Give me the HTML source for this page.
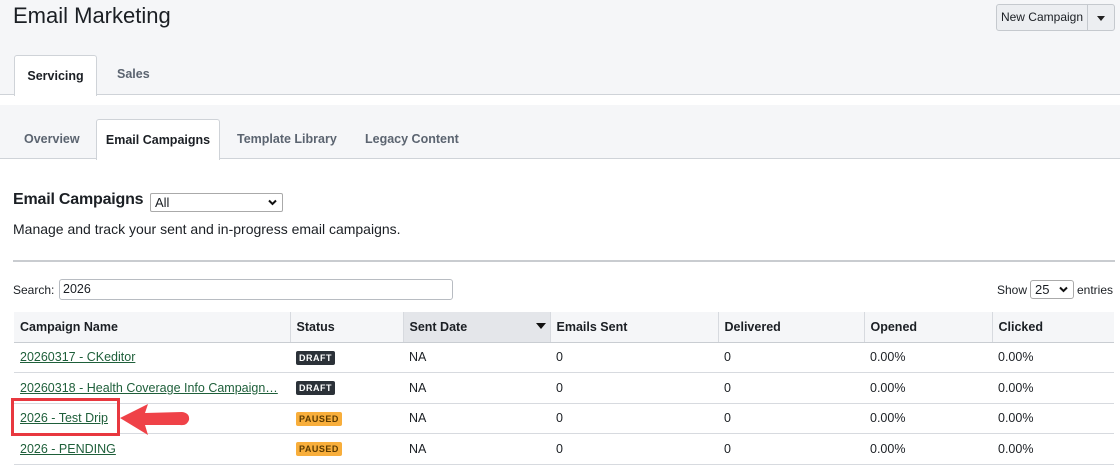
<!DOCTYPE html>
<html><head><meta charset="utf-8"><style>
*{box-sizing:border-box;margin:0;padding:0}
body{width:1120px;height:470px;overflow:hidden;background:#fff;font-family:"Liberation Sans",sans-serif;color:#1b1f24;position:relative;font-size:13px}
.abs{position:absolute}
.top{left:0;top:0;width:1120px;height:95px;background:#f5f6f8;border-bottom:1px solid #cfd3d8}
.sub{left:0;top:105px;width:1120px;height:54px;background:#f5f6f8;border-bottom:1px solid #cfd3d8}
.tab{position:absolute;background:#fff;border:1px solid #cfd3d8;border-bottom:none;border-radius:3px 3px 0 0;font-weight:bold;font-size:12.5px;text-align:center}
.gt{position:absolute;color:#5b6470;font-weight:bold;font-size:12.5px}
table{position:absolute;left:14px;top:312px;width:1100px;border-collapse:collapse;font-size:12.5px}
th{height:30px;background:#f5f6f8;text-align:left;padding-left:6px;border-right:1px solid #d7dadf;border-bottom:1px solid #c9cdd2;font-weight:bold}
th:last-child{border-right:none}
td{height:30.5px;padding-left:6px;border-bottom:1px solid #d7dadf}
a{color:#1e5f3a;text-decoration:underline}
.b{display:inline-block;font-size:9px;font-weight:bold;padding:2px 3px;border-radius:2px;letter-spacing:.5px}
.d{background:#2b3138;color:#fff}.p{background:#f8ae3b;color:#5a3a00}
.chev{position:absolute;right:5px;top:5px}
</style></head><body>
<div class="abs top"></div>
<div class="abs" style="left:13px;top:3px;font-size:22px">Email Marketing</div>
<div class="abs" style="left:996px;top:4px;width:119px;height:27px;border:1px solid #c5c9ce;border-radius:3px;background:#eceef1;font-size:12px">
<div class="abs" style="left:0;top:0;width:91px;height:25px;line-height:25px;text-align:center;border-right:1px solid #c5c9ce">New Campaign</div>
<div class="abs" style="left:100px;top:11px;width:0;height:0;border-left:4px solid transparent;border-right:4px solid transparent;border-top:5px solid #222"></div></div>
<div class="tab" style="left:14px;top:55px;width:83px;height:41px;line-height:40px">Servicing</div>
<div class="gt" style="left:117px;top:67px">Sales</div>
<div class="abs sub"></div>
<div class="gt" style="left:24px;top:132px">Overview</div>
<div class="tab" style="left:96px;top:119px;width:124px;height:41px;line-height:40px">Email Campaigns</div>
<div class="gt" style="left:237px;top:132px">Template Library</div>
<div class="gt" style="left:365px;top:132px">Legacy Content</div>
<div class="abs" style="left:13px;top:191px;font-size:16px;font-weight:bold;letter-spacing:-0.2px">Email Campaigns</div>
<div class="abs" style="left:150px;top:193px;width:133px;height:19px;border:1px solid #aaa;border-radius:2px;font-size:13px;padding-left:4px;line-height:17px">All<svg class="chev" width="9" height="7"><path d="M1 1.5 L4.5 5 L8 1.5" stroke="#111" stroke-width="2" fill="none"/></svg></div>
<div class="abs" style="left:13px;top:221px;font-size:14px">Manage and track your sent and in-progress email campaigns.</div>
<div class="abs" style="left:13px;top:260px;width:1102px;height:2px;background:#c9ccd0"></div>
<div class="abs" style="left:13px;top:283px;font-size:12px">Search:</div>
<div class="abs" style="left:59px;top:279px;width:394px;height:21px;border:1px solid #b8bcc2;border-radius:3px;padding-left:3px;line-height:19px;font-size:12.5px">2026</div>
<div class="abs" style="left:997px;top:283px;font-size:12px">Show</div>
<div class="abs" style="left:1030px;top:280px;width:44px;height:19px;border:1px solid #aaa;border-radius:3px;padding-left:4px;font-size:13px;line-height:17px">25<svg class="chev" width="9" height="7"><path d="M1 1.5 L4.5 5 L8 1.5" stroke="#111" stroke-width="2" fill="none"/></svg></div>
<div class="abs" style="left:1077px;top:283px;font-size:12px">entries</div>
<table>
<tr><th style="width:276px">Campaign Name</th><th style="width:113px">Status</th><th style="width:147px;background:#e4e6ea;position:relative">Sent Date<span style="position:absolute;right:4px;top:11px;border-left:5px solid transparent;border-right:5px solid transparent;border-top:6px solid #111"></span></th><th style="width:168px">Emails Sent</th><th style="width:146px">Delivered</th><th style="width:128px">Opened</th><th>Clicked</th></tr>
<tr><td><a>20260317 - CKeditor</a></td><td><span class="b d">DRAFT</span></td><td>NA</td><td>0</td><td>0</td><td>0.00%</td><td>0.00%</td></tr>
<tr><td><a>20260318 - Health Coverage Info Campaign…</a></td><td><span class="b d">DRAFT</span></td><td>NA</td><td>0</td><td>0</td><td>0.00%</td><td>0.00%</td></tr>
<tr><td><a>2026 - Test Drip</a></td><td><span class="b p">PAUSED</span></td><td>NA</td><td>0</td><td>0</td><td>0.00%</td><td>0.00%</td></tr>
<tr><td><a>2026 - PENDING</a></td><td><span class="b p">PAUSED</span></td><td>NA</td><td>0</td><td>0</td><td>0.00%</td><td>0.00%</td></tr>
</table>
<div class="abs" style="left:11px;top:398px;width:109px;height:38px;border:3px solid #e8383f"></div>
<svg class="abs" style="left:115px;top:400px" width="80" height="40"><path d="M5 18 L33 4 L30 13 L67 12 Q75 13 74 20 Q72 26 65 25 L30 25 L33 35 Z" fill="#ef4248"/></svg>
</body></html>
